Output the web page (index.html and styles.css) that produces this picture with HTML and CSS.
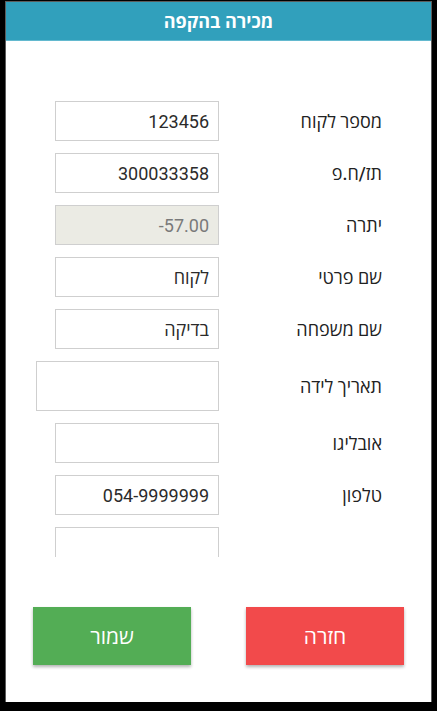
FILE: index.html
```html
<!DOCTYPE html>
<html lang="he">
<head>
<meta charset="utf-8">
<title>מכירה בהקפה</title>
<link rel="stylesheet" href="styles.css">
</head>
<body>
<div class="frame">
  <header class="topbar">מכירה בהקפה</header>
  <div class="scroll">
    <div class="form">
      <div class="row"><input class="field" value="123456" readonly><label class="lbl">מספר לקוח</label></div>
      <div class="row"><input class="field" value="300033358" readonly><label class="lbl">תז/ח.פ</label></div>
      <div class="row"><input class="field disabled" value="-57.00" readonly><label class="lbl">יתרה</label></div>
      <div class="row"><input class="field" value="לקוח" readonly><label class="lbl">שם פרטי</label></div>
      <div class="row"><input class="field" value="בדיקה" readonly><label class="lbl">שם משפחה</label></div>
      <div class="row tall"><input class="field wide" value="" readonly><label class="lbl">תאריך לידה</label></div>
      <div class="row"><input class="field" value="" readonly><label class="lbl">אובליגו</label></div>
      <div class="row"><input class="field" value="054-9999999" readonly><label class="lbl">טלפון</label></div>
      <div class="row"><input class="field" value="" readonly><label class="lbl"></label></div>
    </div>
  </div>
  <div class="actions">
    <button class="btn save">שמור</button>
    <button class="btn back">חזרה</button>
  </div>
</div>
</body>
</html>
```
FILE: styles.css
```css
html, body {
  margin: 0;
  padding: 0;
  background: #000;
  height: 711px;
  overflow: hidden;
}
body {
  font-family: Roboto, "Open Sans", "DejaVu Sans", sans-serif;
}
.frame {
  margin-left: 5px;
  margin-top: 1px;
  width: 425px;
  height: 700px;
  border-left: 1px solid #5c5c5c;
  border-right: 1px solid #5c5c5c;
  border-top: 1px solid #5c5c5c;
  background: #fff;
  display: flex;
  flex-direction: column;
}
.topbar {
  height: 38px;
  background: #31a0bc;
  border-bottom: 1px solid #63b9cf;
  color: #fff;
  font-weight: bold;
  font-size: 18px;
  display: flex;
  align-items: center;
  justify-content: center;
  direction: rtl;
}
.scroll {
  height: 516px;
  overflow: hidden;
}
.form {
  padding-top: 60px;
  display: flex;
  flex-direction: column;
  gap: 12px;
}
.row {
  display: grid;
  grid-template-columns: 213px 163px;
  align-items: center;
  height: 40px;
}
.row.tall {
  height: 50px;
}
.field {
  justify-self: end;
  box-sizing: border-box;
  width: 164px;
  height: 40px;
  margin: 0;
  border: 1px solid #cfcfcf;
  background: #fff;
  padding: 0 9px 0 4px;
  font-family: Roboto, "Open Sans", "DejaVu Sans", sans-serif;
  font-size: 18px;
  color: #2b2b2b;
  text-align: right;
  direction: ltr;
  outline: none;
}
.field.wide {
  width: 183px;
  height: 50px;
}
.field.disabled {
  background: #ebebe4;
  color: #7a7a7a;
}
.lbl {
  text-align: right;
  direction: rtl;
  font-size: 18px;
  font-weight: 500;
  color: #222;
}
.actions {
  display: flex;
  justify-content: space-between;
  padding: 50px 27px 0;
}
.btn {
  width: 158px;
  height: 58px;
  border: none;
  margin: 0;
  color: #fff;
  font-family: Roboto, "Open Sans", "DejaVu Sans", sans-serif;
  font-size: 21px;
  box-shadow: 0 2px 3px rgba(0,0,0,0.3);
  direction: rtl;
}
.save { background: #53ad55; }
.back { background: #f24a4b; }
```
